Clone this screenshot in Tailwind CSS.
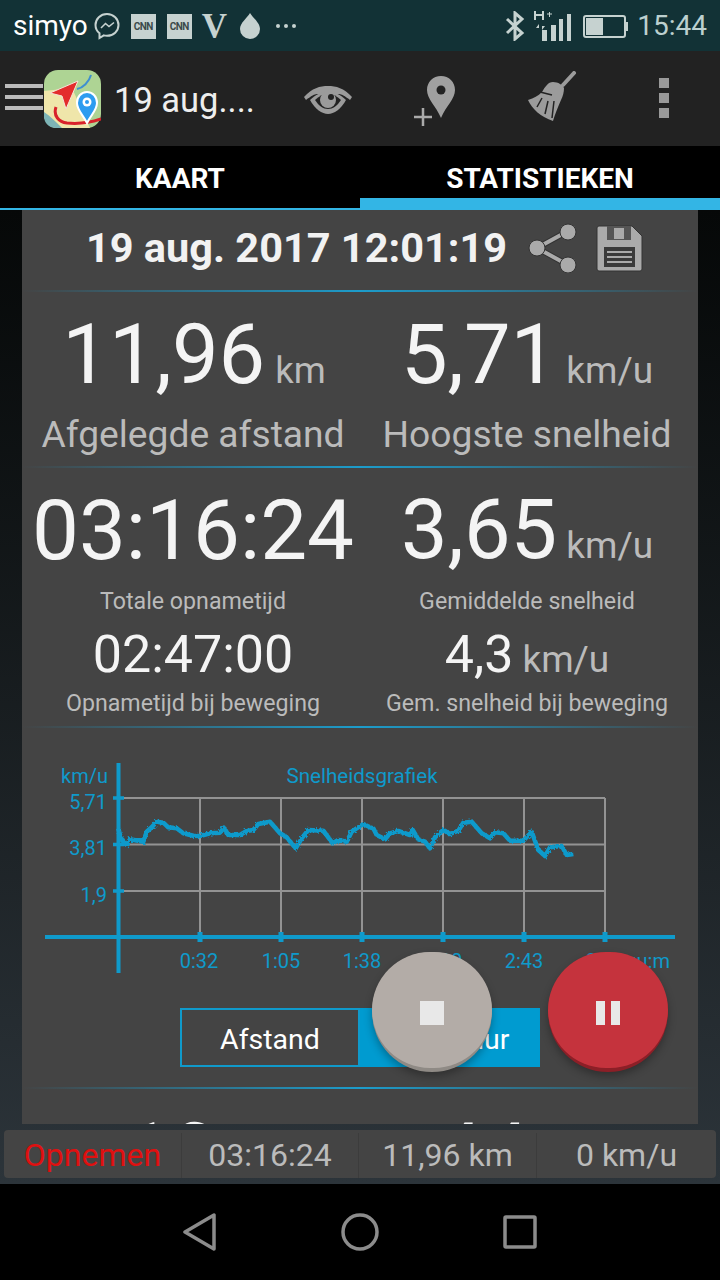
<!DOCTYPE html>
<html lang="en">
<head>
    <meta charset="UTF-8">
    <title>Statistieken</title>
    <script src="https://cdn.jsdelivr.net/npm/@tailwindcss/browser@4"></script>
</head>
<body class="bg-black">
<div class="relative w-[720px] h-[1280px] overflow-hidden flex flex-col font-['Roboto',sans-serif] text-white">

    <!-- status bar -->
    <div class="h-[51px] shrink-0 bg-[#123236] flex items-center pl-[13px] pr-[13px] pt-[1px] text-[#c6d2d0]">
        <span class="text-[28px] leading-none text-white">simyo</span>
        <svg class="ml-[6px]" width="26" height="28" viewBox="0 0 26 28" fill="none" stroke="#c6d2d0" stroke-width="2"><path d="M13 2C6.500 2 1.500 6.800 1.500 13c0 3.500 1.600 6.300 4 8.300V26l4.300-2.600c1 .3 2.100.4 3.200.4 6.500 0 11.500-4.800 11.500-10.800S19.500 2 13 2z"/><path d="M7 16l4.500-4.500 3.500 3 5-4" stroke-width="1.600"/></svg>
        <div class="ml-[11px] w-[25px] h-[25px] bg-[#c6d2d0] flex items-center justify-center text-[10px] font-bold text-[#3b4a4a] tracking-tighter">CNN</div>
        <div class="ml-[11px] w-[25px] h-[25px] bg-[#c6d2d0] flex items-center justify-center text-[10px] font-bold text-[#3b4a4a] tracking-tighter">CNN</div>
        <span class="ml-[10px] text-[35px] leading-none font-bold font-['Liberation_Serif',serif] text-[#c6d2d0]">V</span>
        <svg class="ml-[13px]" width="20" height="26" viewBox="0 0 20 26" fill="#c6d2d0"><path d="M10 0c3 5 10 10 10 16a10 10 0 0 1-20 0C0 10 7 5 10 0z"/></svg>
        <div class="ml-[16px] flex gap-[4px]">
            <div class="w-[4px] h-[4px] rounded-full bg-[#c6d2d0]"></div>
            <div class="w-[4px] h-[4px] rounded-full bg-[#c6d2d0]"></div>
            <div class="w-[4px] h-[4px] rounded-full bg-[#c6d2d0]"></div>
        </div>
        <svg class="ml-auto" width="20" height="30" viewBox="0 0 20 30" fill="none" stroke="#c6d2d0" stroke-width="3"><path d="M2 8l15 14-7 6V2l7 6L2 22"/></svg>
        <svg class="ml-[9px]" width="38" height="32" viewBox="0 0 38 32" fill="#c6d2d0"><rect x="8" y="20" width="5" height="11"/><rect x="17" y="15" width="5" height="16"/><rect x="25" y="9" width="4" height="22"/><rect x="33" y="4" width="4" height="27"/><path d="M1 1v9M9 1v9M1 5h8" stroke="#c6d2d0" stroke-width="2"/><path d="M13 4h5M15.500 2v5" stroke="#c6d2d0" stroke-width="1"/><path d="M5 14l-3 4h3zM8 20l3-4H8z"/></svg>
        <svg class="ml-[11px]" width="45" height="23" viewBox="0 0 45 23" fill="none"><rect x="1" y="1" width="41" height="21" rx="2" stroke="#c6d2d0" stroke-width="2"/><rect x="3" y="3" width="17" height="17" fill="#c6d2d0"/><rect x="43" y="7" width="2" height="9" fill="#c6d2d0"/></svg>
        <span class="ml-[9px] text-[28px] leading-none text-[#bcd0cf]">15:44</span>
    </div>

    <!-- toolbar -->
    <div class="h-[95px] shrink-0 bg-[#222222] flex items-center relative">
        <div class="ml-[5px] -mt-[3px] w-[38px] flex flex-col gap-[7px]">
            <div class="h-[4px] bg-[#bbbbbb]"></div>
            <div class="h-[4px] bg-[#bbbbbb]"></div>
            <div class="h-[4px] bg-[#bbbbbb]"></div>
        </div>
        <svg class="ml-[1px]" width="57" height="58" viewBox="0 0 57 58">
            <rect width="57" height="58" rx="14" fill="#aed494"/>
            <path d="M0 21L28 18 46 58H14C5 58 0 52 0 44z" fill="#efe6aa"/>
            <path d="M0 42c6 4 12 10 18 16H12C4 58 0 52 0 46z" fill="#7db4b6"/>
            <path d="M33 19c6-1 12-7 14-14" fill="none" stroke="#3e8fd0" stroke-width="2"/>
            <path d="M12 37c-3 9 3 15 11 16 10 1 22 0 34-4" fill="none" stroke="#d8222a" stroke-width="3"/>
            <path d="M34 11L6 23l12 3 4 13z" fill="#e32c2c" stroke="#f4e4d8" stroke-width="1"/>
            <path d="M43 22c-6 0-10 5-10 11 0 7 6 12 10 20 4-8 10-13 10-20 0-6-4-11-10-11z" fill="#2d9cf0" stroke="#fff" stroke-width="2"/>
            <circle cx="43" cy="32" r="4.500" fill="#fff"/><circle cx="43" cy="32" r="2" fill="#2d9cf0"/>
        </svg>
        <span class="ml-[13px] pt-[3px] text-[34.500px] leading-none text-[#eeeeee]">19 aug....</span>
        <svg class="absolute left-[304px] top-[34px]" width="48" height="30" viewBox="0 0 48 30">
            <path d="M0 12C8 3 16 1 24 1s16 2 24 11l-2 3c-5-4-9-6-11-6l-22 0c-2 0-6 2-11 6z" fill="#9b9b9b"/>
            <path d="M6 15c6-6 12-8 18-8s12 2 18 8c-5 9-12 14-18 14S11 24 6 15z" fill="#9b9b9b"/>
            <path d="M11 15c4-4 8-6 13-6s9 2 13 6c-4 6-8 9-13 9s-9-3-13-9z" fill="#222222"/>
            <circle cx="24" cy="15" r="8" fill="#9b9b9b"/><circle cx="27" cy="12" r="3" fill="#222222"/>
        </svg>
        <svg class="absolute left-[410px] top-[24px]" width="48" height="52" viewBox="0 0 48 52">
            <path d="M31 0C23 0 17 6 17 14c0 9 9 16 14 28 5-12 14-19 14-28C45 6 39 0 31 0z" fill="#a0a0a0" transform="translate(0 1)"/>
            <circle cx="31" cy="15" r="4.500" fill="#222222"/>
            <path d="M13 34v19M4 43h19" stroke="#222222" stroke-width="5" transform="translate(0 -1)"/>
            <path d="M13 34v18M4 43h18" stroke="#aaaaaa" stroke-width="2.500" transform="translate(0 -1)"/>
        </svg>
        <svg class="absolute left-[527px] top-[20px]" width="50" height="52" viewBox="0 0 50 52">
            <path d="M47 2L36 14" stroke="#9b9b9b" stroke-width="4" stroke-linecap="round"/>
            <path d="M26 11c5 0 10 3 11 6 0 4-1 8-3 12-3 7-6 14-8 21C14 46 5 38 1 29c6-2 10-4 14-8 3-5 6-10 11-10z" fill="#9b9b9b"/>
            <path d="M15 27L10 36M21 30L18 43M27 30L25 47M13 21l12 3" stroke="#222222" stroke-width="1.500" fill="none"/>
        </svg>
        <div class="absolute left-[659px] top-[27px] flex flex-col gap-[5px]">
            <div class="w-[10px] h-[10px] bg-[#999999]"></div>
            <div class="w-[10px] h-[10px] bg-[#999999]"></div>
            <div class="w-[10px] h-[10px] bg-[#999999]"></div>
        </div>
    </div>

    <!-- tabs -->
    <div class="h-[64px] shrink-0 bg-black grid grid-cols-2 grid-rows-[64px] text-[28px] leading-none font-bold text-center">
        <div class="border-b-[2px] border-[#33b5e5] flex items-center justify-center pt-[4px]">KAART</div>
        <div class="border-b-[12px] border-[#33b5e5] flex items-center justify-center pt-[14px]">STATISTIEKEN</div>
    </div>

    <!-- content -->
    <div class="h-[974px] flex flex-col shrink-0 bg-linear-to-b from-[#060808] to-[#2c343a]">
        <div class="mx-[22px] h-[914px] shrink-0 bg-[#444444] overflow-hidden px-[4px]">
            <div class="h-[80px] flex items-center justify-center gap-[21px] pl-[9px] pb-[4px]">
                <span class="text-[41.500px] font-bold text-[#f2f2f2] leading-none whitespace-nowrap">19 aug. 2017 12:01:19</span>
                <div class="flex items-center gap-[19px]">
                    <svg width="49" height="50" viewBox="0 0 49 50" fill="#aaaaaa" stroke="#333333" stroke-width="1">
                        <path d="M40 8L9 25l31 17" fill="none" stroke="#333333" stroke-width="6"/>
                        <path d="M40 8L9 25l31 17" fill="none" stroke="#aaaaaa" stroke-width="4"/>
                        <circle cx="40" cy="9" r="8"/><circle cx="9" cy="25" r="8"/><circle cx="40" cy="42" r="8"/>
                    </svg>
                    <svg width="47" height="47" viewBox="0 0 47 47">
                        <path d="M1 3a2 2 0 0 1 2-2h33l10 10v33a2 2 0 0 1-2 2H3a2 2 0 0 1-2-2z" fill="#aaaaaa" stroke="#333333"/>
                        <rect x="11" y="1" width="24" height="14" fill="#555555"/>
                        <rect x="18" y="3" width="10" height="11" fill="#aaaaaa"/>
                        <rect x="8" y="22" width="31" height="20" fill="#3a3a3a"/>
                        <path d="M11 27h25M11 32h25M11 37h25" stroke="#aaaaaa" stroke-width="2"/>
                    </svg>
                </div>
            </div>
            <div class="h-[2px] -mx-[4px] bg-linear-to-r from-transparent via-[#1c9ccb] to-transparent"></div>

            <div class="grid grid-cols-2 h-[174px] text-center">
                <div>
                    <div class="h-[122px] flex items-baseline justify-center pt-[1px] pl-[2px]"><span class="text-[83px] text-[#f4f4f4]">11,96</span><span class="ml-[10px] text-[36.500px] text-[#bbbbbb]">km</span></div>
                    <div class="text-[37.200px] leading-[40px] text-[#bbbbbb] whitespace-nowrap">Afgelegde afstand</div>
                </div>
                <div>
                    <div class="h-[122px] flex items-baseline justify-center pt-[1px]"><span class="text-[83px] text-[#f4f4f4]">5,71</span><span class="ml-[9px] text-[37px] text-[#bbbbbb]">km/u</span></div>
                    <div class="text-[37.200px] leading-[40px] text-[#bbbbbb] whitespace-nowrap">Hoogste snelheid</div>
                </div>
            </div>
            <div class="h-[2px] -mx-[4px] bg-linear-to-r from-transparent via-[#1c9ccb] to-transparent"></div>

            <div class="grid grid-cols-2 h-[258px] text-center">
                <div>
                    <div class="h-[119px] flex items-baseline justify-center"><span class="text-[83.500px] text-[#f4f4f4]">03:16:24</span></div>
                    <div class="text-[23.200px] leading-[28px] text-[#bbbbbb]">Totale opnametijd</div>
                    <div class="text-[52px] leading-[60px] mt-[10px] text-[#f4f4f4]">02:47:00</div>
                    <div class="text-[23.200px] leading-[28px] mt-[4px] text-[#bbbbbb]">Opnametijd bij beweging</div>
                </div>
                <div>
                    <div class="h-[119px] flex items-baseline justify-center"><span class="text-[83px] text-[#f4f4f4]">3,65</span><span class="ml-[9px] text-[37px] text-[#bbbbbb]">km/u</span></div>
                    <div class="text-[23.200px] leading-[28px] text-[#bbbbbb]">Gemiddelde snelheid</div>
                    <div class="h-[60px] mt-[10px] flex items-baseline justify-center"><span class="text-[52px] leading-[60px] text-[#f4f4f4]">4,3</span><span class="ml-[9px] text-[37px] text-[#bbbbbb]">km/u</span></div>
                    <div class="text-[23.200px] leading-[28px] mt-[4px] text-[#bbbbbb]">Gem. snelheid bij beweging</div>
                </div>
            </div>
            <div class="h-[2px] -mx-[4px] bg-linear-to-r from-transparent via-[#1c9ccb] to-transparent"></div>

            <!-- speed chart, viewBox uses screen coordinates -->
            <svg class="block -mx-[4px] mt-[22px]" width="676" height="230" viewBox="22 750 676 230" font-family="Roboto, sans-serif" font-size="20" fill="#0f9acb">
                <defs>
                    <filter id="rough" x="-5%" y="-30%" width="110%" height="160%">
                        <feTurbulence type="fractalNoise" baseFrequency="0.5" numOctaves="1" seed="4"/>
                        <feDisplacementMap in="SourceGraphic" scale="4"/>
                    </filter>
                </defs>
                <g stroke="#939393" stroke-width="2" fill="none">
                    <path d="M118 798H605M118 844.500H605M118 891H605"/>
                    <path d="M200 798V937M281 798V937M362 798V937M443 798V937M524 798V937M605 798V937"/>
                </g>
                <polyline filter="url(#rough)" fill="none" stroke="#0f9acb" stroke-width="4.500" stroke-linejoin="round" points="118.300,828.300 120.700,837.300 123.300,841.700 126.700,845 130,839.300 143.300,841.700 146.700,831.700 151.700,827.300 156.700,821.700 163.300,822.700 168.300,827.300 176.700,828.300 183.300,833.300 193.300,835.700 200,836 210,833.300 220,832.700 224,827.700 228.300,835 240,835 246.700,831 253.300,830 258.300,824 270,821.700 280,833.300 286.700,837.300 295.700,848.300 301.700,838.300 308.300,830 323.300,830.700 332.700,843.300 338.300,840 346.700,841.700 351.700,831.700 363.300,824 370,827.300 373.300,828.300 376.700,835 385,839.300 390,833.300 398.300,831 410,835 412.700,830 418.300,839.300 425,841.700 430,848.300 435,837.300 443.300,830 450,834 458.300,830.700 463.300,822.700 471.700,821.700 481.700,833.300 490,838.300 495,832.300 503.300,833.300 510,840.700 523.300,840.700 531.700,831.700 538.300,850 545,856 550,847.300 561.700,846 566.700,855 573.300,854"/>
                <g stroke="#0f9acb" fill="none">
                    <path d="M118.500 763V973" stroke-width="4"/>
                    <path d="M45 937H675" stroke-width="4"/>
                    <path d="M113 798h11M113 844.500h11M113 891h11" stroke-width="3.500"/>
                    <path d="M200 932v10M281 932v10M362 932v10M443 932v10M524 932v10M605 932v10" stroke-width="5"/>
                </g>
                <text x="61" y="783">km/u</text>
                <text x="362" y="783" text-anchor="middle" font-size="20.600">Snelheidsgrafiek</text>
                <text x="107" y="809" text-anchor="end">5,71</text>
                <text x="107" y="855" text-anchor="end">3,81</text>
                <text x="107" y="902" text-anchor="end">1,9</text>
                <text x="199" y="968" text-anchor="middle">0:32</text>
                <text x="281" y="968" text-anchor="middle">1:05</text>
                <text x="362" y="968" text-anchor="middle">1:38</text>
                <text x="443" y="968" text-anchor="middle">2:10</text>
                <text x="524" y="968" text-anchor="middle">2:43</text>
                <text x="605" y="968" text-anchor="middle">3:16</text>
                <text x="670" y="968" text-anchor="end">uu:m</text>
            </svg>

            <div class="mt-[28px] ml-[154px] w-[360px] h-[59px] grid grid-cols-2 text-[28.500px]">
                <div class="border-2 border-[#0f9acb] flex items-center justify-center pt-[5px] text-white">Afstand</div>
                <div class="bg-[#009bd0] flex items-center justify-center pt-[5px] text-white">Tijdsduur</div>
            </div>
            <div class="h-[2px] -mx-[4px] mt-[20px] bg-linear-to-r from-transparent via-[#1c9ccb] to-transparent"></div>

            <div class="grid grid-cols-2 text-center mt-[17px]">
                <div class="flex items-baseline justify-center"><span class="text-[83px] leading-[95px] text-[#f4f4f4]">10</span><span class="ml-[11px] text-[37px] text-[#bbbbbb]">m</span></div>
                <div class="flex items-baseline justify-center"><span class="text-[83px] leading-[95px] text-[#f4f4f4]">44</span><span class="ml-[2px] text-[37px] text-[#bbbbbb]">km/u</span></div>
            </div>
        </div>

        <!-- recording bar -->
        <div class="mt-[6px] mx-[4px] h-[48px] shrink-0 rounded-[4px] bg-[#444444] grid grid-cols-[178px_177px_178px_179px] text-[32px] text-[#bbbbbb] text-center leading-[45px] pt-[3px] pb-[3px]">
            <div class="text-[#e01010] border-r border-[#3c3c3c]">Opnemen</div>
            <div class="border-r border-[#3c3c3c]">03:16:24</div>
            <div class="border-r border-[#3c3c3c]">11,96 km</div>
            <div>0 km/u</div>
        </div>
    </div>

    <!-- nav bar -->
    <div class="h-[96px] shrink-0 bg-black flex items-center justify-center gap-[124px] pb-[1px]">
        <svg width="34" height="38" viewBox="0 0 34 38" fill="none" stroke="#8c8c8c" stroke-width="3.500" stroke-linejoin="round"><path d="M31 2v34L2 19z"/></svg>
        <svg width="38" height="38" viewBox="0 0 38 38" fill="none" stroke="#8c8c8c" stroke-width="3.500"><circle cx="19" cy="19" r="17"/></svg>
        <svg width="34" height="34" viewBox="0 0 34 34" fill="none" stroke="#8c8c8c" stroke-width="3.500" stroke-linejoin="round"><rect x="2" y="2" width="30" height="30" rx="1"/></svg>
    </div>

    <!-- floating buttons -->
    <div class="absolute left-[372px] top-[952px] w-[120px] h-[120px] rounded-full bg-[#8f8a85] shadow-[0_4px_8px_rgba(0,0,0,0.3)]">
        <div class="w-[120px] h-[116px] rounded-full bg-[#b3aca7] flex items-center justify-center pt-[5px]">
            <div class="w-[24px] h-[24px] bg-[#e8e8e8]"></div>
        </div>
    </div>
    <div class="absolute left-[548px] top-[952px] w-[120px] h-[120px] rounded-full bg-[#8c1f27] shadow-[0_4px_8px_rgba(0,0,0,0.3)]">
        <div class="w-[120px] h-[116px] rounded-full bg-[#c5333d] flex items-center justify-center gap-[6px] pt-[5px]">
            <div class="w-[9px] h-[24px] bg-[#e8e8e8]"></div>
            <div class="w-[9px] h-[24px] bg-[#e8e8e8]"></div>
        </div>
    </div>
</div>
</body>
</html>
